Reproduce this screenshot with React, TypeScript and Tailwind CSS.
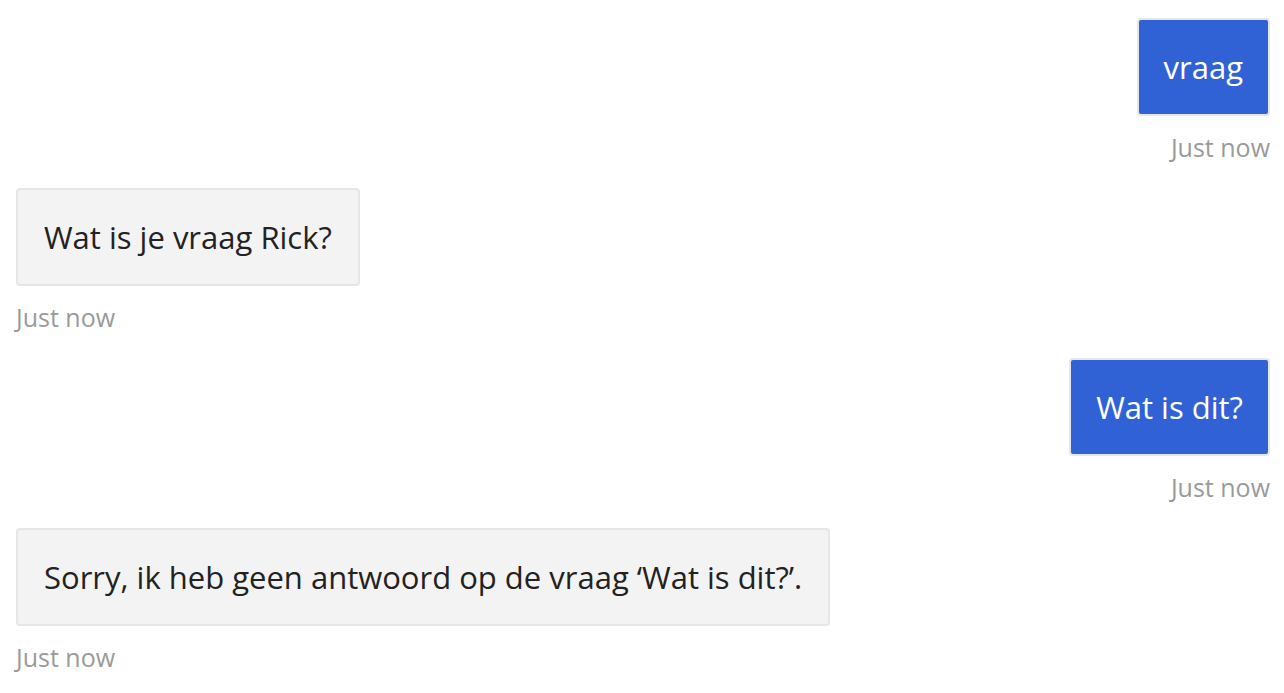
const messages = [
  { from: "user", text: "vraag" },
  { from: "bot", text: "Wat is je vraag Rick?" },
  { from: "user", text: "Wat is dit?" },
  { from: "bot", text: "Sorry, ik heb geen antwoord op de vraag \u2018Wat is dit?\u2019." },
];

const App = () => {
  return (
    <div
      className="min-h-screen bg-white pt-[18px] pl-4 pr-[14px]"
      style={{ fontFamily: '"Open Sans", "Noto Sans", sans-serif' }}
    >
      {messages.map((m, i) => {
        const user = m.from === "user";
        return (
          <div key={i} className={`flex flex-col mb-[25px] ${user ? "items-end" : "items-start"}`}>
            <div
              className={
                user
                  ? "rounded-[4px] border-2 border-[#e6e6e6] bg-[#3062d6] px-[25px] pt-[27px] pb-[26px] text-[31px] leading-[41px] text-white"
                  : "rounded-[4px] border-2 border-[#e6e6e6] bg-[#f3f3f3] px-[26px] pt-[27px] pb-[26px] text-[31px] leading-[41px] text-[#222]"
              }
            >
              {m.text}
            </div>
            <div className="mt-[15px] text-[25px] leading-[32px] text-[#9a9a9a]">Just now</div>
          </div>
        );
      })}
    </div>
  );
};

export default App;
